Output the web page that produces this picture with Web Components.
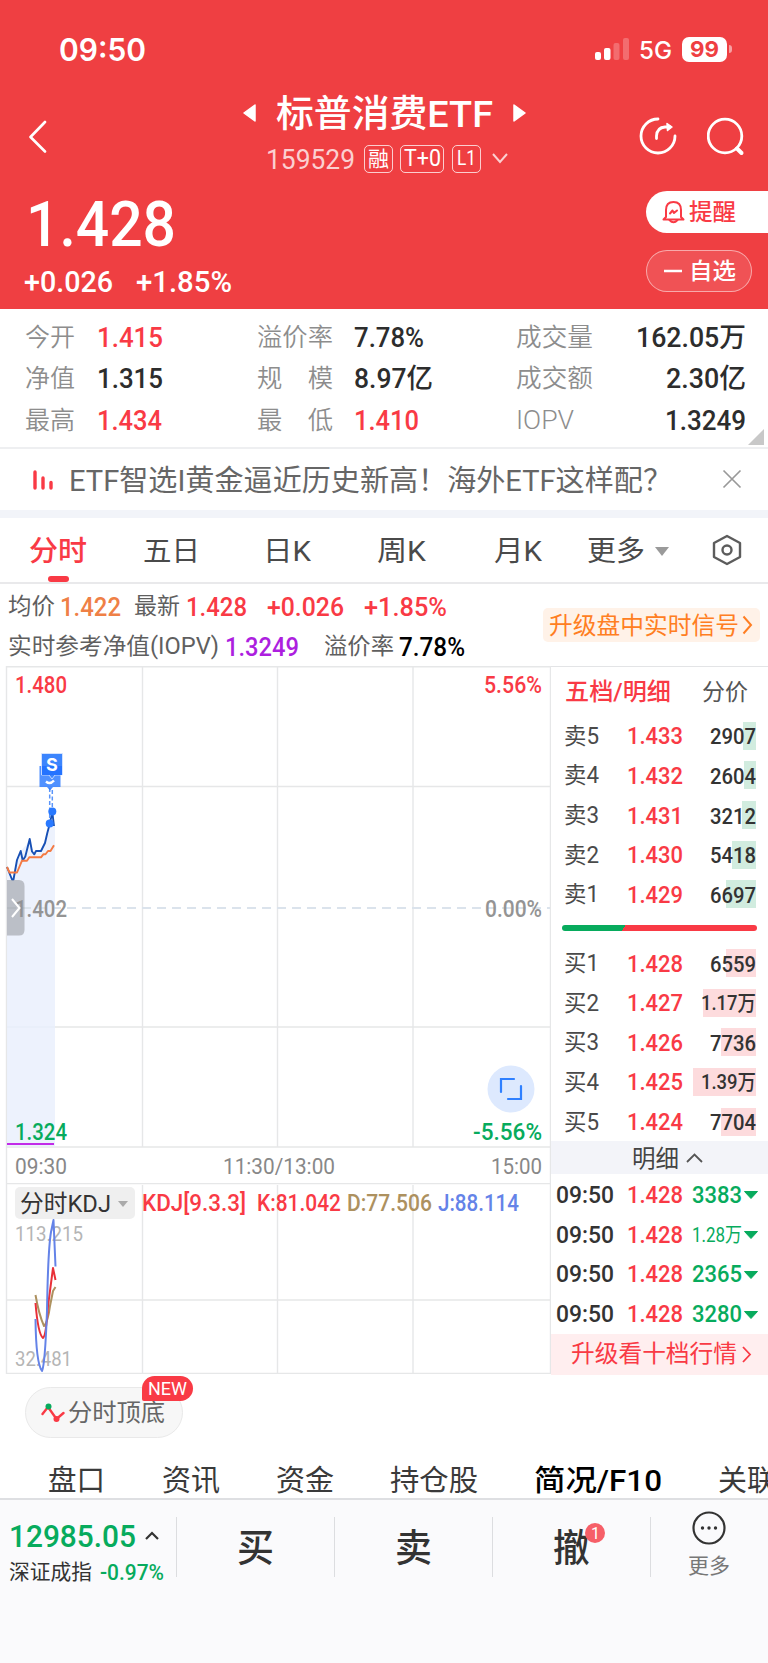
<!DOCTYPE html>
<html lang="zh-CN">
<head>
<meta charset="UTF-8">
<meta name="viewport" content="width=768">
<title>标普消费ETF 159529</title>
<style>
  * { box-sizing: border-box; }
  body {
    margin: 0;
    width: 768px;
    height: 1663px;
    overflow: hidden;
    background: #fff;
    color: #333;
    font-family: Roboto, "Noto Sans CJK SC", sans-serif;
  }
</style>
</head>
<body>
<quote-page></quote-page>

<script>
const RED = '#f93a45';
const GREEN = '#07ab5d';

// Shared rules, each component puts them in its own shadow root
const base = `
  * { box-sizing: border-box; }
  :host { display: block; flex: none; }
  svg { display: block; flex: none; }
  .row { display: flex; align-items: center; }
`;

/**
 * One line of text squeezed or stretched to a given width.
 * Attributes: w (width), s (font size), g (gap before), b (weight), c (colour), y (baseline nudge)
 */
class FitText extends HTMLElement {
  constructor() {
    super();
    this.attachShadow({ mode: 'open' });
    this.shadowRoot.innerHTML = `
      <style>
        :host { display: block; flex: none; white-space: nowrap; }
        span { display: block; width: max-content; transform-origin: 0 50%; }
      </style>
      <span><slot></slot></span>
    `;
  }

  connectedCallback() {
    const attr = (name, fallback) => this.getAttribute(name) || fallback;
    const size = Number(attr('s', 24));
    const width = Number(attr('w', 0));
    const span = this.shadowRoot.querySelector('span');
    this.style.fontSize = size + 'px';
    this.style.lineHeight = Math.round(size * 1.2) + 'px';
    this.style.height = Math.round(size * 1.2) + 'px';
    this.style.fontWeight = attr('b', 400);
    this.style.marginLeft = attr('g', 0) + 'px';
    if (this.hasAttribute('c')) this.style.color = attr('c');
    const natural = span.getBoundingClientRect().width;
    const scale = width && natural ? width / natural : 1;
    if (width) this.style.width = width + 'px';
    span.style.transform = `translateY(${attr('y', 0)}px) scaleX(${scale})`;
  }
}

const t = (text, w, s, opts = {}) => {
  const rest = Object.keys(opts).map((k) => `${k}="${opts[k]}"`).join(' ');
  return `<fit-text w="${w}" s="${s}" ${rest}>${text}</fit-text>`;
};

// Base class: render the markup once in an open shadow root
class View extends HTMLElement {
  connectedCallback() {
    if (this.shadowRoot) return;
    this.attachShadow({ mode: 'open' });
    this.shadowRoot.innerHTML = `<style>${base}${this.css()}</style>${this.html()}`;
  }
  css() { return ''; }
  html() { return ''; }
}

class StatusBar extends View {
  css() {
    return `
      :host { height: 96px; color: #fff; font-family: Inter, sans-serif; }
      .row { height: 98px; padding-left: 59px; }
      .bars { margin-left: 449px; }
      .cell { width: 45px; height: 25px; margin-left: 10px; border-radius: 7px; background: #fff; padding-left: 8px; }
      .tip { width: 3px; height: 8px; margin-left: 2px; border-radius: 0 3px 3px 0; background: #f7a0a2; }
    `;
  }
  html() {
    return `
      <div class="row">
        ${t('09:50', 87, 31, { b: 600, y: -0.5 })}
        <svg class="bars" width="34" height="22" fill="#fff">
          <rect y="14" width="6" height="8" rx="2"/>
          <rect x="9" y="10" width="6.500" height="12" rx="2"/>
          <rect x="18.500" y="5" width="6" height="17" rx="2" opacity=".24"/>
          <rect x="28" width="6" height="22" rx="2" opacity=".24"/>
        </svg>
        ${t('5G', 33, 24, { g: 10, b: 500, y: 0.5 })}
        <div class="row cell">${t('99', 29, 22, { b: 700, c: '#ef3f42' })}</div>
        <div class="tip"></div>
      </div>
    `;
  }
}

class QuoteHeader extends View {
  css() {
    return `
      :host { height: 213px; color: #fff; }
      .top { display: flex; height: 92px; padding-left: 29px; }
      .back { margin-top: 24px; }
      .name { width: 460px; margin-left: 121px; }
      .title { height: 34px; padding-left: 75px; }
      .code { height: 29px; margin-top: 14px; padding-left: 98px; }
      .tag { height: 28px; border: 1.500px solid rgba(255,255,255,.75); border-radius: 5px; justify-content: center; margin-left: 8px; }
      .tools { display: flex; gap: 29px; margin-top: 21px; margin-left: 10px; }
      .bottom { display: flex; justify-content: space-between; height: 121px; }
      .price { padding: 0 0 0 26px; }
      .pill { height: 42px; border-radius: 21px; padding-left: 16px; }
      .alert { width: 122px; background: #fff; border-radius: 21px 0 0 21px; margin-top: 3px; }
      .watch { width: 106px; margin-top: 16.500px; background: rgba(255,255,255,.1); border: 1px solid rgba(255,255,255,.5); }
    `;
  }
  html() {
    return `
      <div class="top">
        <svg class="back" width="18" height="34" fill="none" stroke="#fff" stroke-width="2.600" stroke-linecap="round" stroke-linejoin="round"><path d="M16 2 L1.500 17 L16 31.500"/></svg>
        <div class="name">
          <div class="row title">
            <svg width="14" height="18" fill="#fff" stroke="#fff" stroke-width="1.500" stroke-linejoin="round"><path d="M12 1 V17 L1 9 Z"/></svg>
            ${t('标普消费ETF', 217, 37, { g: 19, b: 500, y: 1.5 })}
            <svg width="14" height="18" fill="#fff" stroke="#fff" stroke-width="1.500" stroke-linejoin="round" style="margin-left:20px"><path d="M1 1 V17 L12 9 Z"/></svg>
          </div>
          <div class="row code">
            ${t('159529', 89, 27, { c: '#fbd0d1', y: 1 })}
            <div class="row tag" style="width:29px;margin-left:9px">${t('融', 21, 21, { y: 0.5 })}</div>
            <div class="row tag" style="width:44px;margin-left:7px">${t('T+0', 37, 23)}</div>
            <div class="row tag" style="width:29px">${t('L1', 19, 21)}</div>
            <svg width="16" height="11" fill="none" stroke="#fbd0d1" stroke-width="2" style="margin-left:11px"><path d="M1 1 L8 9 L15 1"/></svg>
          </div>
        </div>
        <div class="tools">
          <svg width="40" height="40" fill="none" stroke="#fff" stroke-width="2.800" stroke-linecap="round" stroke-linejoin="round">
            <path d="M20 2 A17 17 0 1 0 37 19"/>
            <path d="M18.500 21.500 V19 Q19 10.500 27 10 H32"/>
            <path d="M29 6.500 L34 10 L29.500 13.500 Z" fill="#fff" stroke-width="1.500"/>
          </svg>
          <svg width="40" height="40" fill="none" stroke="#fff" stroke-width="2.800" stroke-linecap="round">
            <circle cx="18" cy="19" r="16.800"/><path d="M30 31.500 L34.500 36" stroke-width="4"/>
          </svg>
        </div>
      </div>
      <div class="bottom">
        <div class="price">
          ${t('1.428', 150, 63, { b: 500, y: -1.5 })}
          <div class="row" style="margin:1px 0 0 -2px">
            ${t('+0.026', 89, 29, { b: 500 })}
            ${t('+1.85%', 96, 29, { g: 23, b: 500 })}
          </div>
        </div>
        <div>
          <div class="row pill alert">
            <svg width="23" height="24" fill="none" stroke="${RED}" stroke-width="2" stroke-linecap="round" stroke-linejoin="round">
              <path d="M4 17 V10 C4 4.500 7 2 11.500 2 C16 2 19 4.500 19 10 V17 L21.500 19.500 H1.500 Z"/>
              <path d="M7.500 20 Q11.500 24.500 15.500 20"/>
              <path d="M8 13.500 L10.500 10.500 L12 13 L15 10.500"/>
            </svg>
            ${t('提醒', 47, 23, { g: 4, b: 500, c: RED, y: 1 })}
          </div>
          <div class="row pill watch">
            <svg width="20" height="4" fill="none" stroke="#fff" stroke-width="2.500"><path d="M1 2 H19"/></svg>
            ${t('自选', 47, 23, { g: 6, b: 500, y: 0.5 })}
          </div>
        </div>
      </div>
    `;
  }
}

class StatGrid extends View {
  css() {
    return `
      :host { height: 140px; padding: 7px 22px 0 25px; border-bottom: 2px solid #eeeff1; position: relative; }
      .line { height: 41.600px; }
      .corner { position: absolute; right: 4px; bottom: 2px; }
    `;
  }
  html() {
    const k = (text, w, g = 0) => t(text, w, 25, { g, c: '#8d8d8d', y: 0.5, b: 350 });
    const v = (text, w, c = '#2d2d2d') => t(text, w, 27, { c, b: 500, y: 1 });
    return `
      <div class="row line">
        ${k('今开', 50)}<div style="width:182px;padding-left:22px">${v('1.415', 66, RED)}</div>
        ${k('溢价率', 76)}<div style="width:184px;padding-left:21px">${v('7.78%', 70)}</div>
        ${k('成交量', 77)}<div class="row" style="width:153px;justify-content:flex-end">${v('162.05万', 110)}</div>
      </div>
      <div class="row line">
        ${k('净值', 50)}<div style="width:182px;padding-left:22px">${v('1.315', 66)}</div>
        ${k('规&#12288;模', 76)}<div style="width:184px;padding-left:21px">${v('8.97亿', 79)}</div>
        ${k('成交额', 77)}<div class="row" style="width:153px;justify-content:flex-end">${v('2.30亿', 80)}</div>
      </div>
      <div class="row line">
        ${k('最高', 50)}<div style="width:182px;padding-left:22px">${v('1.434', 65, RED)}</div>
        ${k('最&#12288;低', 76)}<div style="width:184px;padding-left:21px">${v('1.410', 65, RED)}</div>
        ${k('IOPV', 58)}<div class="row" style="width:172px;justify-content:flex-end">${v('1.3249', 81)}</div>
      </div>
      <svg class="corner" width="16" height="16" fill="#c8c8c8"><path d="M16 0 V16 H0 Z"/></svg>
    `;
  }
}

class PromoBanner extends View {
  css() {
    return `
      :host { height: 69px; border-bottom: 8px solid #f2f4f9; }
      .row { height: 61px; padding-left: 33px; }
    `;
  }
  html() {
    return `
      <div class="row">
        <svg width="21" height="20" stroke="${RED}" stroke-width="3.400" stroke-linecap="round"><path d="M2 2 V18 M10 8 V18 M18 12.500 V18"/></svg>
        ${t('ETF智选I黄金逼近历史新高！海外ETF这样配？', 603, 29, { g: 15, c: '#666', y: 1.5 })}
        <svg width="20" height="20" fill="none" stroke="#999" stroke-width="1.700" style="margin:-2px 0 0 50px"><path d="M1.500 1.500 L18.500 18.500 M18.500 1.500 L1.500 18.500"/></svg>
      </div>
    `;
  }
}

class PeriodTabs extends View {
  css() {
    return `
      :host { height: 66px; border-bottom: 2px solid #e9e9eb; }
      .row { height: 64px; padding-left: 29px; align-items: stretch; }
      .row > * { align-self: center; }
      .row > .tab { align-self: stretch; display: flex; flex-direction: column; align-items: center; justify-content: space-between; padding-top: 15px; }
      i { width: 21px; height: 6px; border-radius: 3px; background: ${RED}; }
    `;
  }
  html() {
    const k = (text, w, g) => t(text, w, 28, { g, c: '#4a4a4a', y: 2 });
    return `
      <div class="row">
        <div class="tab">${t('分时', 58, 28, { c: RED, b: 500, y: 2 })}<i></i></div>
        ${k('五日', 57, 56)}
        ${k('日K', 48, 63)}
        ${k('周K', 49, 66)}
        ${k('月K', 48, 68)}
        ${k('更多', 58, 45)}
        <svg width="16" height="11" fill="#9a9a9a" style="margin:2px 0 0 9px"><path d="M1 1 H15 L8 10 Z"/></svg>
        <svg width="30" height="32" fill="none" stroke="#5c5c5c" stroke-width="2.400" stroke-linejoin="round" style="margin-left:42px">
          <path d="M15 2 L28 9 V23 L15 30 L2 23 V9 Z"/><circle cx="15" cy="16" r="4.500"/>
        </svg>
      </div>
    `;
  }
}

class QuoteInfo extends View {
  css() {
    return `
      :host { height: 82px; }
      .wrap { display: flex; padding-left: 8px; }
      .lines { width: 535px; padding-top: 1px; }
      .line { height: 40px; }
      .up { width: 217px; height: 34px; margin-top: 24px; padding-left: 5px; border-radius: 5px; background: #fff2e8; }
    `;
  }
  html() {
    const k = (text, w, g = 0) => t(text, w, 23, { g, c: '#5f5f5f', y: 1.5 });
    const v = (text, w, g, c) => t(text, w, 25.5, { g, c, b: 500, y: 1.5 });
    return `
      <div class="wrap">
        <div class="lines">
          <div class="row line">
            ${k('均价', 47)}${v('1.422', 61, 5, '#ef8046')}
            ${k('最新', 46, 13)}${v('1.428', 61, 6, RED)}
            ${v('+0.026', 77, 20, RED)}${v('+1.85%', 83, 20, RED)}
          </div>
          <div class="row line">
            ${k('实时参考净值(IOPV)', 211)}${v('1.3249', 74, 6, '#ad1fdf')}
            ${k('溢价率', 70, 25)}${v('7.78%', 66, 5, '#000')}
          </div>
        </div>
        <div class="row up">
          ${t('升级盘中实时信号', 190, 23.5, { g: 1, c: '#ff7e22', y: 1 })}
          <svg width="11" height="20" fill="none" stroke="#ff7e22" stroke-width="2" style="margin-left:3px"><path d="M1.500 1.500 L9 10 L1.500 18.500"/></svg>
        </div>
      </div>
    `;
  }
}

class PriceChart extends View {
  css() {
    return `
      :host { height: 519px; position: relative; }
      .plot, .labels { position: absolute; inset: 0; }
      .labels { display: flex; flex-direction: column; padding: 5px 9px 0 15px; }
      .pair { display: flex; justify-content: space-between; align-items: center; }
      .zoom { align-self: flex-end; margin: 142px 7px 0 0; }
    `;
  }
  html() {
    const n = (text, w, c) => t(text, w, 23, { c, b: 500, y: 0.5 });
    const a = (text, w) => t(text, w, 22.5, { c: '#888', b: 400 });
    return `
      <svg class="plot" width="551" height="519" fill="none">
        <path d="M6.500 .7 H551 M6.500 0 V519 M142.500 0 V481 M277.500 0 V481 M413 0 V481 M550.500 0 V519 M6.500 120.500 H551 M6.500 361 H551 M6.500 481 H551 M6.500 517.600 H551" stroke="#e6e7e8" stroke-width="1.400"/>
        <path d="M7 201 L12.700 214 L17 194 L20.700 185 L29.700 175 L34 188 L41 185 L50 157 L55 160 V480.500 H7 Z" fill="#e8effd" opacity=".8"/>
        <path d="M7 242 H550" stroke="#dbe3ec" stroke-width="1.800" stroke-dasharray="9 6"/>
        <path d="M7 201 L12 213.500 H13.500 L17 194 L20.700 185 L22.700 194.500 L25.300 190.500 L29.700 173 L32 185.500 L34.300 188.300 L36 185 H41 L45 177 L47.300 167 L49.700 158 L52.300 146 L54 160" stroke="#1750b5" stroke-width="1.900" stroke-linejoin="round"/>
        <path d="M7 201 L9.500 206.500 H17 L22 194.700 H27 L29.300 191.300 H41 L43.300 188.300 H45.500 L48 185 H50.500 L54 179.300" stroke="#f47a43" stroke-width="1.900" stroke-linejoin="round"/>
        <path d="M49.700 122 V155 M52.300 124 V142" stroke="#5b95fa" stroke-width="1.500" stroke-dasharray="4 2.500"/>
        <path d="M39.500 100 H60.500 V121 H53 L50 124.500 L47 121 H39.500 Z" fill="#2979ff" opacity=".82"/>
        <path d="M41.500 87.500 H62.500 V109 H55 L52 113 L49 109 H41.500 Z" fill="#3c85fd" stroke="#dfeaff" stroke-width=".8"/>
        <path d="M42 100 H62 V109 H42 Z" fill="#2473ff"/>
        <circle cx="52.300" cy="145.500" r="4" fill="#2979ff"/>
        <circle cx="49.700" cy="157.500" r="4" fill="#2979ff"/>
        <path d="M46 115.500 Q50 119 54 114.500" stroke="#fff" stroke-width="2.400"/>
        <text x="52" y="104.500" fill="#fff" text-anchor="middle" font-family="Inter, sans-serif" font-size="18" font-weight="700">S</text>
        <path d="M7 478 H54" stroke="#c22be8" stroke-width="2"/>
      </svg>
      <div class="labels">
        <div class="pair">${n('1.480', 52, RED)}${n('5.56%', 58, RED)}</div>
        <div class="pair" style="margin-top:196px">${n('1.402', 52, '#949494')}${n('0.00%', 57, '#949494')}</div>
        <svg class="zoom" width="48" height="48" fill="none" stroke="#2f80ff" stroke-width="2.200" stroke-linecap="round">
          <circle cx="24" cy="24" r="23.500" fill="#dde9fe" stroke="none"/>
          <path d="M14 27 V14 H27 M34 21 V34 H21"/>
        </svg>
        <div class="pair" style="margin-top:5px">${n('1.324', 52, GREEN)}${n('-5.56%', 69, GREEN)}</div>
        <div class="pair" style="margin-top:7px">${a('09:30', 52)}${a('11:30/13:00', 112)}${a('15:00', 51)}</div>
      </div>
      <svg class="plot" width="30" height="519" fill="none">
        <path d="M7 214 H19 Q24.500 214 24.500 220 V264 Q24.500 269.500 19 269.500 H7 Z" fill="#8d9095" opacity=".52"/>
        <path d="M12 233 L19.500 242 L12 251" stroke="#fff" stroke-width="2"/>
      </svg>
    `;
  }
}

class KdjChart extends View {
  css() {
    return `
      :host { height: 189px; position: relative; }
      .plot, .labels { position: absolute; inset: 0; }
      .labels { display: flex; flex-direction: column; padding: 2px 0 2px 15px; }
      .pick { width: 120px; height: 32px; padding-left: 5px; border-radius: 5px; background: #efefef; }
    `;
  }
  html() {
    const v = (text, w, g, c) => t(text, w, 23, { g, c, b: 500, y: 1 });
    return `
      <svg class="plot" width="551" height="189" fill="none">
        <path d="M6.500 0 V188.500 H551 M142.500 0 V188 M277.500 0 V188 M413 0 V188 M550.500 0 V189 M6.500 115 H551" stroke="#e6e7e8" stroke-width="1.400"/>
      </svg>
      <div class="labels">
        <div class="row">
          <div class="row pick">
            ${t('分时KDJ', 91, 24, { c: '#333', y: 0.5 })}
            <svg width="10" height="6" fill="#aaa" style="margin:2px 0 0 7px"><path d="M0 0 H10 L5 6 Z"/></svg>
          </div>
          ${v('KDJ[9.3.3]', 104, 7, RED)}
          ${v('K:81.042', 84, 11, RED)}
          ${v('D:77.506', 85, 6, '#ad915f')}
          ${v('J:88.114', 81, 6, '#6483e8')}
        </div>
        ${t('113.215', 68, 21, { c: '#b5b5b5', y: 2.5 })}
        <div style="flex:1"></div>
        ${t('32.481', 57, 21, { c: '#b5b5b5' })}
      </div>
      <svg class="plot" width="551" height="189" fill="none" stroke-width="2" stroke-linejoin="round">
        <path d="M35.500 110 Q39 130 44 141 Q48 137 50 121 L53 106 L55.500 102" stroke="#ad915f"/>
        <path d="M35.500 118 Q38 149 43 153 Q46 151 48 121 L53 83 L55.500 95" stroke="#e93038"/>
        <path d="M35.500 134 Q36 178 42 186 Q45 180 47 126 Q48 65 51 47 L53.500 35 L55.500 81.500" stroke="#6483e8"/>
      </svg>
    `;
  }
}

class OrderBook extends View {
  css() {
    return `
      :host { width: 217px; height: 708px; border-top: 1px solid #e3e4e6; }
      .head { height: 49px; padding-left: 14px; }
      .lv { height: 39.650px; padding-left: 13px; }
      .qty { width: 73px; height: 28px; justify-content: flex-end; background-repeat: no-repeat; background-position: right; }
      .ratio { height: 6px; width: 195px; margin: 11px 0 12px 11px; border-radius: 3px; background: linear-gradient(120deg, ${GREEN} 32%, ${RED} 32%); }
      .more { height: 33px; padding-left: 81px; background: #f3f4f9; }
      .tick { height: 39.800px; padding-left: 5px; }
      .up { height: 41px; padding-left: 20px; background: #ffeeef; }
    `;
  }
  html() {
    const sells = [['卖5', '1.433', '2907', 13], ['卖4', '1.432', '2604', 12], ['卖3', '1.431', '3212', 14], ['卖2', '1.430', '5418', 24], ['卖1', '1.429', '6697', 30]];
    const buys = [['买1', '1.428', '6559', 30], ['买2', '1.427', '1.17万', 53], ['买3', '1.426', '7736', 35], ['买4', '1.425', '1.39万', 63], ['买5', '1.424', '7704', 35]];
    const level = (bar) => ([name, price, qty, w]) => `
      <div class="row lv">
        ${t(name, 35, 23, { c: '#4a4a4a', y: 0.5 })}
        ${t(price, 56, 24, { g: 28, b: 500, c: RED, y: 0.5 })}
        <div class="row qty" style="background-image:linear-gradient(${bar},${bar});background-size:${w}px 28px">
          ${qty.includes('万') ? t(qty, 55, 21, { b: 500, y: 0.5 }) : t(qty, 46, 22.5, { b: 500, y: 0.5 })}
        </div>
      </div>`;
    const ticks = ['3383', '1.28万', '2365', '3280'].map((qty) => `
      <div class="row tick">
        ${t('09:50', 58, 24, { b: 500, y: 0.5 })}
        ${t('1.428', 56, 24, { g: 13, b: 500, c: RED, y: 0.5 })}
        ${t(qty, 50, qty.includes('万') ? 20 : 24, { g: 9, b: qty.includes('万') ? 400 : 500, c: GREEN, y: 0.5 })}
        <svg width="14" height="8" fill="${GREEN}" style="margin:2px 0 0 2px"><path d="M.5 .5 H13.500 L7 7.500 Z" stroke="${GREEN}" stroke-linejoin="round"/></svg>
      </div>`).join('');
    return `
      <div class="row head">
        ${t('五档/明细', 106, 24, { b: 500, c: RED, y: 0.5 })}
        ${t('分价', 46, 23, { g: 31, c: '#555', y: 0.5 })}
      </div>
      ${sells.map(level('#d1ecdf')).join('')}
      <div class="ratio"></div>
      ${buys.map(level('#fddbdd')).join('')}
      <div class="row more">
        ${t('明细', 47, 23.500, { c: '#444', y: 0.5 })}
        <svg width="17" height="10" fill="none" stroke="#555" stroke-width="1.800" style="margin-left:7px"><path d="M1 9 L8.500 1.500 L16 9"/></svg>
      </div>
      ${ticks}
      <div class="row up">
        ${t('升级看十档行情', 166, 23.500, { c: RED })}
        <svg width="10" height="17" fill="none" stroke="${RED}" stroke-width="1.800" style="margin-left:5px"><path d="M1 1 L8 8.500 L1 16"/></svg>
      </div>
    `;
  }
}

class SignalChip extends View {
  css() {
    return `
      :host { height: 76px; padding: 13px 0 0 25px; }
      .chip { position: relative; width: 158px; height: 51px; padding-left: 15px; border: 1.500px solid #e9e9e9; border-radius: 26px; background: #f7f7f7; }
      .new { position: absolute; left: 116px; top: -12.500px; width: 51px; height: 25px; justify-content: center; border-radius: 13px 13px 13px 2px; background: ${RED}; }
    `;
  }
  html() {
    return `
      <div class="row chip">
        <svg width="24" height="22" fill="none" stroke="${RED}" stroke-width="2.400" stroke-linecap="round">
          <path d="M1.500 12 L7 5 L15.500 17 L22.500 11"/>
          <circle cx="7.500" cy="4.500" r="3" fill="${GREEN}" stroke="none"/><circle cx="15.500" cy="17" r="3" fill="${RED}" stroke="none"/>
        </svg>
        ${t('分时顶底', 97, 24, { g: 3, c: '#666', y: 1 })}
        <div class="row new">${t('NEW', 39, 17.5, { c: '#fff', b: 400, y: 0.5 })}</div>
      </div>
    `;
  }
}

class SectionTabs extends View {
  css() {
    return `
      :host { height: 50px; border-bottom: 2px solid #dedfe2; overflow: hidden; }
      .row { height: 58px; padding-left: 48px; }
    `;
  }
  html() {
    const k = (text, w, g) => t(text, w, 29, { g, c: '#3a3a3a', y: 2 });
    return `
      <div class="row">
        ${k('盘口', 57, 0)}${k('资讯', 58, 57)}${k('资金', 58, 56)}${k('持仓股', 88, 56)}
        ${t('简况/F10', 128, 29, { g: 56, c: '#000', b: 500, y: 2 })}${k('关联', 58, 56)}
      </div>
    `;
  }
}

class TradeBar extends View {
  css() {
    return `
      :host { height: 164px; background: #fafafc; }
      .row { align-items: flex-start; }
      .index { width: 177px; height: 60px; margin-top: 17px; padding-left: 9px; border-right: 1px solid #dcdde0; }
      .btn { position: relative; width: 158px; height: 60px; margin-top: 17px; justify-content: center; align-items: center; border-right: 1px solid #dcdde0; }
      .badge { position: absolute; left: 92px; top: 6px; width: 20px; height: 20px; border-radius: 50%; justify-content: center; align-items: center; background: #f65f68; }
      .more { flex: 1; display: flex; flex-direction: column; align-items: center; gap: 9px; padding: 11px 1px 0 0; }
    `;
  }
  html() {
    const action = (text, extra = '') => `<div class="row btn">${t(text, 37, 38, { b: 500, y: 1 })}${extra}</div>`;
    return `
      <div class="row">
        <div class="index">
          <div class="row" style="align-items:center">
            ${t('12985.05', 127, 31, { b: 500, c: GREEN, y: 0.5 })}
            <svg width="14" height="9" fill="none" stroke="#333" stroke-width="2.200" style="margin-left:9px"><path d="M1 8 L7 2 L13 8"/></svg>
          </div>
          <div class="row" style="align-items:center;margin-top:5px">
            ${t('深证成指', 83, 21, {})}${t('-0.97%', 64, 22, { g: 8, c: GREEN, b: 500, y: 0.5 })}
          </div>
        </div>
        ${action('买')}${action('卖')}${action('撤', `<div class="row badge">${t('1', 9, 17, { c: '#fff' })}</div>`)}
        <div class="more">
          <svg width="34" height="34" fill="none" stroke="#333" stroke-width="2.200">
            <circle cx="17" cy="17" r="15.500"/>
            <g fill="#333" stroke="none"><circle cx="10.500" cy="17" r="1.700"/><circle cx="17" cy="17" r="1.700"/><circle cx="23.500" cy="17" r="1.700"/></g>
          </svg>
          ${t('更多', 42, 21, { c: '#777' })}
        </div>
      </div>
    `;
  }
}

class QuotePage extends View {
  css() {
    return `
      :host { width: 768px; height: 1663px; display: flex; flex-direction: column; }
      .hero { background: #ef3f42; }
      .market { display: flex; height: 708px; }
      .charts { width: 551px; }
    `;
  }
  html() {
    return `
      <div class="hero"><status-bar></status-bar><quote-header></quote-header></div>
      <stat-grid></stat-grid>
      <promo-banner></promo-banner>
      <period-tabs></period-tabs>
      <quote-info></quote-info>
      <div class="market">
        <div class="charts"><price-chart></price-chart><kdj-chart></kdj-chart></div>
        <order-book></order-book>
      </div>
      <signal-chip></signal-chip>
      <section-tabs></section-tabs>
      <trade-bar></trade-bar>
    `;
  }
}

customElements.define('fit-text', FitText);
customElements.define('status-bar', StatusBar);
customElements.define('quote-header', QuoteHeader);
customElements.define('stat-grid', StatGrid);
customElements.define('promo-banner', PromoBanner);
customElements.define('period-tabs', PeriodTabs);
customElements.define('quote-info', QuoteInfo);
customElements.define('price-chart', PriceChart);
customElements.define('kdj-chart', KdjChart);
customElements.define('order-book', OrderBook);
customElements.define('signal-chip', SignalChip);
customElements.define('section-tabs', SectionTabs);
customElements.define('trade-bar', TradeBar);
customElements.define('quote-page', QuotePage);
</script>
</body>
</html>
